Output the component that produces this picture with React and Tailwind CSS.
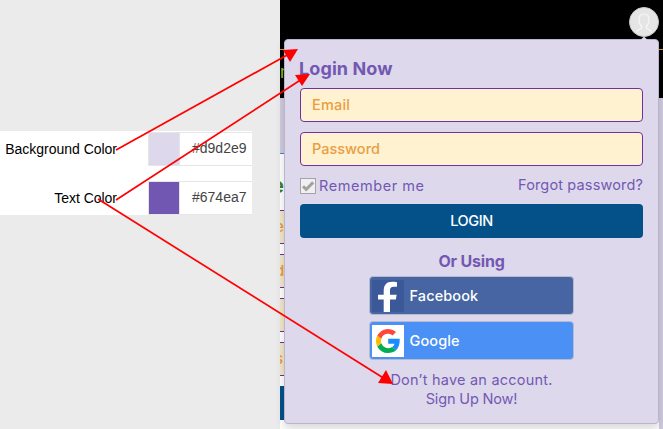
import React from "react";

const fields = ["e", "d", "t", "s"];

function SettingRow({ label, value, swatch, className }) {
  return (
    <div className={`flex ${className}`}>
      <div className="w-[117px] shrink-0 pt-[8px] text-right text-[14px] leading-[18px] tracking-[-0.02px] text-black whitespace-nowrap">{label}</div>
      <div className="ml-[31px] flex h-[34px] w-[104px] border-y border-l border-[#e6e6e6]">
        <div className={`w-[31px] shrink-0 border-r border-[#e6e6e6] ${swatch}`} />
        <div className="pl-[12px] pt-[6px] text-[14px] leading-[18px] text-[#444]">{value}</div>
      </div>
    </div>
  );
}

function SettingsPane() {
  return (
    <aside className="w-[280px] shrink-0 bg-[#ebebeb] pt-[131px] font-['Liberation_Sans',sans-serif]">
      <div className="h-[84px] w-[252px] bg-white pt-px">
        <SettingRow label="Background Color" value="#d9d2e9" swatch="bg-[#ddd8eb]" className="h-[49px]" />
        <SettingRow label="Text Color" value="#674ea7" swatch="bg-[#7157b1]" className="h-[34px]" />
      </div>
    </aside>
  );
}

function BackgroundPage() {
  return (
    <div className="flex min-w-0 flex-1 flex-col overflow-hidden bg-white">
      <div className="h-[98px] shrink-0 bg-black pt-[49px]">
        <div className="h-px bg-[#d69a42]" />
        <div className="pt-[10px] text-[17px] leading-[24px] text-[#8cc81e]">n</div>
      </div>
      <div className="flex h-[331px]">
        <div className="w-[379px] shrink-0">
          <div className="h-[56px] border-b border-[#378bc9] bg-[#d0cbdf]" />
          <div className="-ml-[9px] h-[56px] pt-[17px] text-[22px] font-semibold leading-[28px] text-[#398026]">e</div>
          <div className="flex flex-col gap-[10px]">
            {fields.map((f) => (
              <div key={f} className="h-[34px] border-y border-[#7030a0] bg-[#f2e6c5]">
                <div className="-ml-[5px] text-[15px] font-medium leading-[32px] text-[#e69a42]">{f}</div>
              </div>
            ))}
            <div className="h-[34px] bg-[#04518a]" />
          </div>
        </div>
        <div className="flex-1 bg-[#d0cbdf]" />
      </div>
    </div>
  );
}

function Field({ label, tracking }) {
  return (
    <div className="h-[34px] rounded-[4px] border border-[#7030a0] bg-[#fff2d0] pl-[11px] text-[14.5px] font-medium leading-[32px] text-[#ea9d43]">
      <span className={tracking}>{label}</span>
    </div>
  );
}

function FacebookIcon() {
  return (
    <svg width="32" height="32" viewBox="0 0 32 32">
      <rect width="32" height="32" fill="#3b5998" />
      <path d="M11.7 32V19.500H6v-4.700h5.700v-3.800C11.700 5 14.500 1.700 20 1.700c1.800 0 3.600.1 5 .5v4.600h-3.200c-2.900 0-3.800 1.200-3.800 3.700v4.300h6.600l-.7 4.700H18V32Z" fill="white" />
    </svg>
  );
}

function GoogleIcon() {
  return (
    <svg width="32" height="32" viewBox="0 0 32 32">
      <rect width="32" height="32" fill="white" />
      <g transform="translate(4 4)">
        <path fill="#1a8cff" d="M23.700 9.800H12.200v4.900h6.300a5.900 5.900 0 0 1-2.400 3.400l3.900 3.200c2.600-2.400 4-6.200 3.700-11.500Z" />
        <path fill="#00ad54" d="M12 24c3.200 0 6-1.100 8.100-2.800l-4-3.100A7.200 7.200 0 0 1 5.300 14.300l-4 3.100A12 12 0 0 0 12 24Z" />
        <path fill="#fbbc05" d="M5.300 14.300a7.300 7.300 0 0 1 0-4.600l-4-3.100a12 12 0 0 0 0 10.800l4-3.100Z" />
        <path fill="#ff4838" d="M12 4.800c1.800 0 3.400.6 4.600 1.800L20 3.100A12 12 0 0 0 1.300 6.600l4 3.100A7.200 7.200 0 0 1 12 4.800Z" />
      </g>
    </svg>
  );
}

function SocialButton({ icon, label, className }) {
  return (
    <button className={`flex h-[39px] w-[205px] items-center rounded-[4px] border border-[#b6bbd2] pl-[2px] text-[14.5px] font-medium leading-[20px] text-white ${className}`}>
      {icon}
      <span className="ml-[6px] tracking-[0.1px]">{label}</span>
    </button>
  );
}

function LoginPopup() {
  return (
    <section className="absolute left-[284px] top-[39px] h-[385px] w-[375px] rounded-[4px] border border-[#bbb5ca] bg-[#ddd8eb] px-[15px] pt-[17px] text-[#7358b3] shadow-[0_5px_10px_rgba(0,0,0,0.15)]">
      <h1 className="-ml-px h-[31px] text-[18px] font-bold leading-[24px] tracking-[0.1px]">Login Now</h1>
      <div className="flex flex-col gap-[10px]">
        <Field label="Email" tracking="tracking-[0.2px]" />
        <Field label="Password" tracking="tracking-[0px]" />
      </div>
      <div className="flex h-[38px] justify-between pt-[9px] text-[14.5px] leading-[20px]">
        <div className="flex">
          <span className="mt-[3px] flex h-[16px] w-[16px] items-center justify-center border border-[#a5a3a9] bg-[#f0f0f0]">
            <svg width="14" height="14" viewBox="0 0 14 14" fill="none" stroke="#a2a2a2" strokeWidth="3">
              <path d="m2 7.200 3.200 3.200 7-7" />
            </svg>
          </span>
          <span className="ml-[3px] mt-px tracking-[0.56px]">Remember me</span>
        </div>
        <span className="tracking-[0.15px]">Forgot password?</span>
      </div>
      <button className="h-[34px] w-full rounded-[4px] bg-[#04518a] text-[14.5px] font-medium leading-[34px] tracking-[-0.4px] text-white">LOGIN</button>
      <h2 className="mt-[11px] text-center text-[16px] font-bold leading-[24px] tracking-[-0.2px]">Or Using</h2>
      <div className="-ml-px mt-[3px] flex flex-col items-center gap-[6px]">
        <SocialButton icon={<FacebookIcon />} label="Facebook" className="bg-[#4665a2]" />
        <SocialButton icon={<GoogleIcon />} label="Google" className="bg-[#4a90f5]" />
      </div>
      <div className="mt-[10px] text-center text-[14.5px] leading-[19px]">
        <div className="tracking-[0.22px]">Don’t have an account.</div>
        <div className="tracking-[-0.15px]">Sign Up Now!</div>
      </div>
    </section>
  );
}

function Avatar() {
  return (
    <svg className="absolute left-[629px] top-[7px]" width="30" height="33" viewBox="0 0 30 33" fill="none">
      <circle cx="15" cy="15" r="14.5" fill="#e5e5e5" stroke="#ccc" />
      <path d="M7.500 25.500c.3-3.200 5.500-2.700 5.500-6-2.300-1.700-3-4-3-6.500 0-4 1.500-6 5-6s5 2 5 6c0 2.500-.7 4.800-3 6.500 0 3.300 5.200 2.800 5.500 6" stroke="#f6f6f6" strokeWidth="1.200" />
      <path d="m11.500 33 3.500-3.500 3.500 3.500Z" fill="#ddd8eb" />
    </svg>
  );
}

function Arrows() {
  return (
    <svg className="pointer-events-none absolute inset-0" width="663" height="429" viewBox="0 0 663 429" fill="#f00" stroke="#f00">
      <g strokeWidth="1.7">
        <path d="M116 150 289 54" />
        <path d="M116 200 302 79" />
        <path d="M98 199 385 379" />
      </g>
      <g stroke="none">
        <path d="m298 49-8 13-7-12Z" />
        <path d="m310 74-8 12-7-11Z" />
        <path d="m393 384-15-1 8-13Z" />
      </g>
    </svg>
  );
}

export default function App() {
  return (
    <main className="relative flex h-[429px] w-[663px] overflow-hidden font-[Inter,sans-serif]">
      <SettingsPane />
      <BackgroundPage />
      <LoginPopup />
      <Avatar />
      <Arrows />
    </main>
  );
}
